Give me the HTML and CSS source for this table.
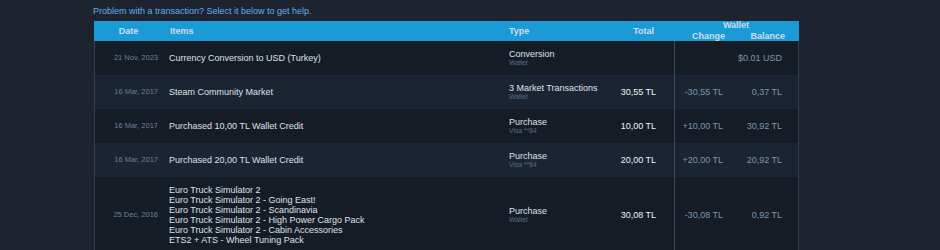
FILE: index.html
```html
<!DOCTYPE html>
<html lang="en">
<head>
<meta charset="utf-8">
<title>Purchase History</title>
<link rel="stylesheet" href="styles.css">
</head>
<body>
<div class="page">
  <div class="intro">Problem with a transaction? Select it below to get help.</div>
  <table class="history">
    <colgroup>
      <col class="c-date"><col class="c-items"><col class="c-type"><col class="c-total"><col class="c-change"><col class="c-balance">
    </colgroup>
    <thead>
      <tr>
        <th class="h-date" rowspan="2">Date</th>
        <th class="h-items" rowspan="2">Items</th>
        <th class="h-type" rowspan="2">Type</th>
        <th class="h-total" rowspan="2">Total</th>
        <th class="h-wallet" colspan="2">Wallet</th>
      </tr>
      <tr>
        <th class="h-change">Change</th>
        <th class="h-balance">Balance</th>
      </tr>
    </thead>
    <tbody>
      <tr class="row dark">
        <td class="date">21 Nov, 2023</td>
        <td class="items">Currency Conversion to USD (Turkey)</td>
        <td class="type"><div class="t-main">Conversion</div><div class="t-sub">Wallet</div></td>
        <td class="total"></td>
        <td class="change"></td>
        <td class="balance">$0.01 USD</td>
      </tr>
      <tr class="row light">
        <td class="date">16 Mar, 2017</td>
        <td class="items">Steam Community Market</td>
        <td class="type"><div class="t-main">3 Market Transactions</div><div class="t-sub">Wallet</div></td>
        <td class="total">30,55 TL</td>
        <td class="change">-30,55 TL</td>
        <td class="balance">0,37 TL</td>
      </tr>
      <tr class="row dark">
        <td class="date">16 Mar, 2017</td>
        <td class="items">Purchased 10,00 TL Wallet Credit</td>
        <td class="type"><div class="t-main">Purchase</div><div class="t-sub">Visa **84</div></td>
        <td class="total">10,00 TL</td>
        <td class="change">+10,00 TL</td>
        <td class="balance">30,92 TL</td>
      </tr>
      <tr class="row light">
        <td class="date">16 Mar, 2017</td>
        <td class="items">Purchased 20,00 TL Wallet Credit</td>
        <td class="type"><div class="t-main">Purchase</div><div class="t-sub">Visa **84</div></td>
        <td class="total">20,00 TL</td>
        <td class="change">+20,00 TL</td>
        <td class="balance">20,92 TL</td>
      </tr>
      <tr class="row dark">
        <td class="date">25 Dec, 2016</td>
        <td class="items">
          <div>Euro Truck Simulator 2</div>
          <div>Euro Truck Simulator 2 - Going East!</div>
          <div>Euro Truck Simulator 2 - Scandinavia</div>
          <div>Euro Truck Simulator 2 - High Power Cargo Pack</div>
          <div>Euro Truck Simulator 2 - Cabin Accessories</div>
          <div>ETS2 + ATS - Wheel Tuning Pack</div>
        </td>
        <td class="type"><div class="t-main">Purchase</div><div class="t-sub">Wallet</div></td>
        <td class="total">30,08 TL</td>
        <td class="change">-30,08 TL</td>
        <td class="balance">0,92 TL</td>
      </tr>
    </tbody>
  </table>
</div>
</body>
</html>
```

FILE: styles.css
```css
html, body {
  margin: 0;
  padding: 0;
  background: #1e2330;
}
body {
  font-family: "Liberation Sans", Arial, sans-serif;
  font-size: 9px;
}
.page {
  padding: 6px 0 0 94px;
  width: 705px;
}
.intro {
  color: #62b1e8;
  line-height: 10px;
  margin-left: -1px;
  margin-bottom: 5px;
}
.history {
  width: 705px;
  table-layout: fixed;
  border-collapse: separate;
  border-spacing: 0;
}
.c-date { width: 68px; }
.c-items { width: 340px; }
.c-type { width: 108px; }
.c-total { width: 64px; }
.c-change { width: 59px; }
.c-balance { width: 66px; }

.history th {
  background: #1a9bd7;
  color: #cfdde9;
  font-weight: bold;
  font-size: 9px;
  padding: 0;
  vertical-align: middle;
  white-space: nowrap;
}
.h-date { text-align: center; border-left: 1px solid #1a9bd7; }
.h-items { text-align: left; padding-left: 8px !important; }
.h-type { text-align: left; padding-left: 7px !important; }
.h-total { text-align: right; padding-right: 20px !important; }
.h-wallet { text-align: center; line-height: 9px; height: 10px; padding-top: 0; vertical-align: top !important; border-right: 1px solid #1a9bd7; }
.h-change { text-align: right; padding-right: 8px !important; line-height: 10px; height: 10px; }
.h-balance { text-align: right; padding-right: 13px !important; line-height: 10px; height: 10px; border-right: 1px solid #1a9bd7; }

.history td {
  padding: 8px 0;
  vertical-align: middle;
  line-height: 10px;
  white-space: nowrap;
}
.row.dark td { background: #161c26; }
.row.light td { background: #1b2433; }

.date {
  border-left: 1px solid #2c4453;
  text-align: right;
  padding-right: 4px !important;
  color: #6b8097;
  font-size: 7.5px;
}
.items {
  padding-left: 7px !important;
  color: #dde3e8;
}
.type {
  padding-left: 7px !important;
  color: #dde3e8;
}
.t-main { line-height: 10px; }
.t-sub {
  line-height: 8px;
  font-size: 6.8px;
  color: #566d86;
}
.total {
  text-align: right;
  padding-right: 18px !important;
  color: #eef2f5;
}
.change {
  border-left: 1px solid #3a495c;
  text-align: right;
  padding-right: 10px !important;
  color: #7f95ab;
}
.balance {
  border-right: 1px solid #2e3d50;
  text-align: right;
  padding-right: 16px !important;
  color: #7f95ab;
}
```
